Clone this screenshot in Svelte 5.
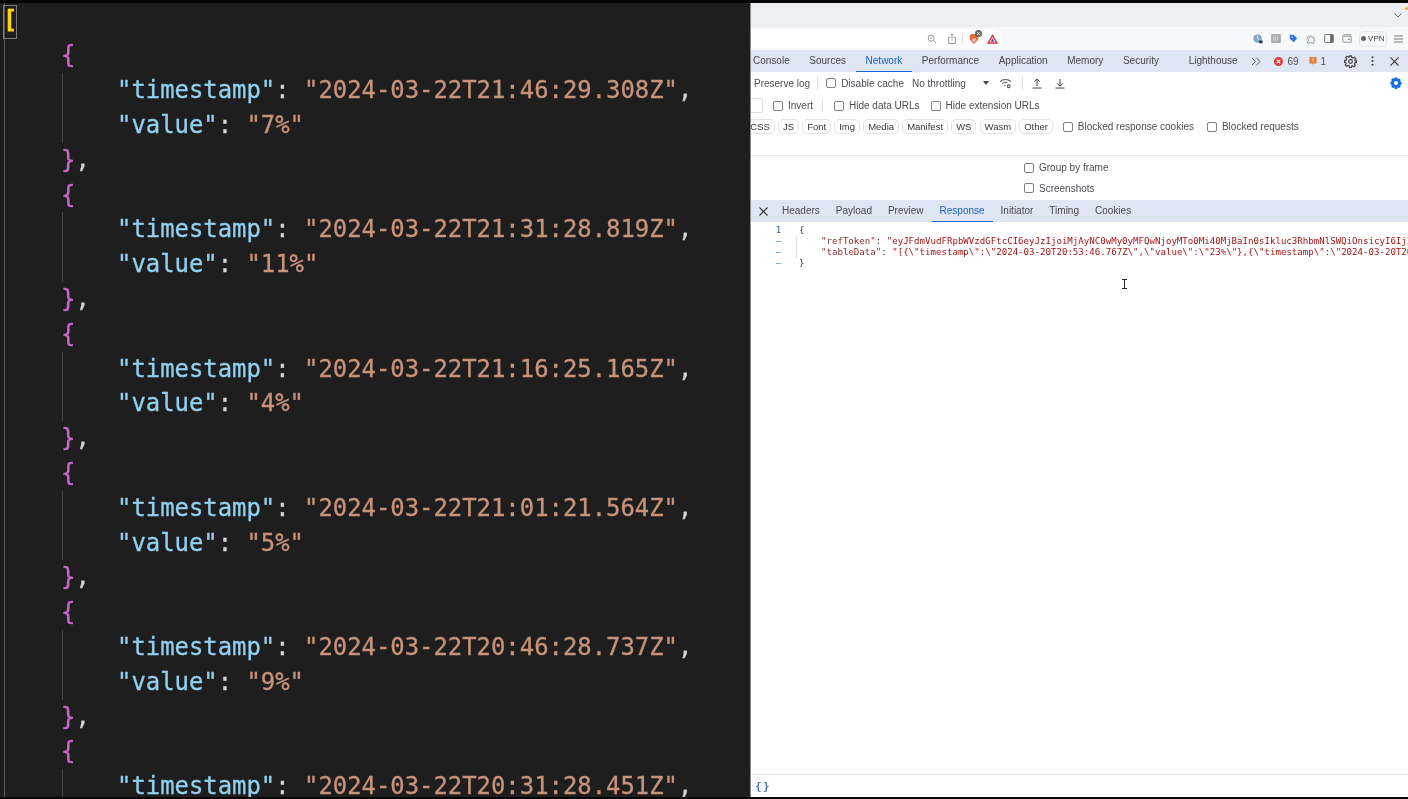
<script>
	const entries = [
		{ timestamp: "2024-03-22T21:46:29.308Z", value: "7%" },
		{ timestamp: "2024-03-22T21:31:28.819Z", value: "11%" },
		{ timestamp: "2024-03-22T21:16:25.165Z", value: "4%" },
		{ timestamp: "2024-03-22T21:01:21.564Z", value: "5%" },
		{ timestamp: "2024-03-22T20:46:28.737Z", value: "9%" },
		{ timestamp: "2024-03-22T20:31:28.451Z", value: "6%" }
	];
	const tabs = ["Console", "Sources", "Network", "Performance", "Application", "Memory", "Security", "Lighthouse"];
	const chips = ["CSS", "JS", "Font", "Img", "Media", "Manifest", "WS", "Wasm", "Other"];
	const detail_tabs = ["Headers", "Payload", "Preview", "Response", "Initiator", "Timing", "Cookies"];
	const ref_token = "eyJFdmVudFRpbWVzdGFtcCI6eyJzIjoiMjAyNC0wMy0yMFQwNjoyMTo0Mi40MjBaIn0sIkluc3RhbmNlSWQiOnsicyI6IjIbWFpbiJ9";
	const table_data = '[{\\"timestamp\\":\\"2024-03-20T20:53:46.767Z\\",\\"value\\":\\"23%\\"},{\\"timestamp\\":\\"2024-03-20T20:38:46.112Z\\"';
</script>

<div class="screen">
	<div class="frame">
		<section class="editor">
			<div class="code">
				<div class="line"><span class="match">[</span></div>
				{#each entries as entry}
					<div class="line ind"><span class="brace">{"{"}</span></div>
					<div class="body">
						<div class="line"><span class="key">"timestamp"</span><span class="punct">:</span> <span class="str">"{entry.timestamp}"</span><span class="punct">,</span></div>
						<div class="line"><span class="key">"value"</span><span class="punct">:</span> <span class="str">"{entry.value}"</span></div>
					</div>
					<div class="line ind"><span class="brace">{"}"}</span><span class="punct">,</span></div>
				{/each}
			</div>
		</section>

		<section class="browser">
			<div class="tabstrip">
				<svg class="chev" width="8" height="5" viewBox="0 0 8 5"><path d="M.5.5L4 4 7.500.5" fill="none" stroke="#666"/></svg>
				<i class="dot"></i>
			</div>
			<div class="toolbar">
				<div class="url">
					<svg width="10" height="10" viewBox="0 0 12 12" fill="none" stroke="#888"><circle cx="5" cy="5" r="3.6"/><path d="M8 8l3 3M3.500 5h3"/></svg>
					<svg class="share" width="8" height="11" viewBox="0 0 9 12" fill="none" stroke="#888"><path d="M2.500 4.500H.5v7h8v-7h-2M4.500 8V1M3 2.500L4.500 1 6 2.500"/></svg>
					<i class="vsep"></i>
					<span class="brave">
						<svg width="10" height="12" viewBox="0 0 13 14"><path d="M2 1.500L4 .5h5l2 1 1.500 1-.8 5.500L6.500 13.500 1.300 8 .5 2.500z" fill="#e2693a"/><path d="M4 6l2.500 1L9 6l-1 4-1.500 1L5 10z" fill="#f7d9c8"/></svg>
						<b>×</b>
					</span>
					<svg class="tri" width="11" height="10" viewBox="0 0 14 12"><path d="M7 1.500L12.500 11h-11z" fill="none" stroke="#d8344b" stroke-width="1.800"/><path d="M7 5l2.300 4.500H4.700z" fill="#5a3f9e"/></svg>
				</div>
				<div class="ext">
					<svg width="10" height="10" viewBox="0 0 13 13"><circle cx="6" cy="6" r="5.500" fill="#7fa6c9"/><path d="M6 2.500V6l2 1.500" stroke="#fff" fill="none" stroke-width="1.300"/><rect x="8" y="8.500" width="4.500" height="3.500" fill="#333"/></svg>
					<svg width="10" height="9" viewBox="0 0 13 12"><rect width="13" height="12" rx="1" fill="#a9adb2"/><path d="M3.500 3v6M6 3L5 9M9 3L8 9" stroke="#e8e8e8"/></svg>
					<svg width="9" height="9" viewBox="0 0 12 12"><path d="M1 1h5l5 5-5 5-5-5z" fill="#2f74d6"/><circle cx="4" cy="4" r="1" fill="#fff"/></svg>
					<svg width="10" height="10" viewBox="0 0 13 13" fill="none" stroke="#777"><path d="M2 4h2.500a1.500 1.500 0 0 1 3 0H10v2.500a1.500 1.500 0 0 1 0 3V12H7.500a1.500 1.500 0 0 0-3 0H2V9.500a1.500 1.500 0 0 0 0-3z"/></svg>
					<svg width="10" height="9" viewBox="0 0 13 12"><rect x=".7" y=".7" width="11.600" height="10.600" rx="1" fill="none" stroke="#666" stroke-width="1.200"/><rect x="8" y="1" width="4" height="10" fill="#666"/></svg>
					<svg width="10" height="9" viewBox="0 0 13 12" fill="none" stroke="#777"><path d="M11 2.500V1H2a1 1 0 0 0-1 1v8a1 1 0 0 0 1 1h10V3H2"/><rect x="8" y="6" width="2" height="2" fill="#777" stroke="none"/></svg>
					<span class="vpn"><i></i>VPN</span>
					<svg class="burger" width="9" height="8" viewBox="0 0 9 8" stroke="#777"><path d="M0 1h9M0 4h9M0 7h9"/></svg>
				</div>
			</div>

			<div class="dt-tabs">
				{#each tabs as tab}
					<span class="tab" class:active={tab === "Network"} class:wide={tab === "Lighthouse"}>{tab}</span>
				{/each}
				<svg class="more" width="10" height="9" viewBox="0 0 11 10" fill="none" stroke="#555" stroke-width="1.100"><path d="M1 1l4 4-4 4M6 1l4 4-4 4"/></svg>
				<svg class="err" width="9" height="9" viewBox="0 0 10 10"><circle cx="5" cy="5" r="5" fill="#d93a3a"/><path d="M3 3l4 4M7 3l-4 4" stroke="#fff" stroke-width="1.200"/></svg>
				<span class="count c69">69</span>
				<svg class="issue" width="8" height="8" viewBox="0 0 9 10"><path d="M0 0h9v8H5L3.500 10V8H0z" fill="#e0803a"/><path d="M4.500 1.500v3.500" stroke="#fff"/></svg>
				<span class="count c1">1</span>
				<svg class="gear" width="13" height="13" viewBox="0 0 14 14" fill="none" stroke="#444" stroke-width="1.300"><path d="M6 1h2l.4 1.700 1.300.6 1.500-.9 1.400 1.400-.9 1.500.6 1.300L13.500 6v2l-1.700.4-.6 1.300.9 1.500-1.400 1.400-1.500-.9-1.300.6L8 13.500H6l-.4-1.700-1.300-.6-1.500.9-1.400-1.400.9-1.500-.6-1.300L.5 8V6l1.700-.4.6-1.300-.9-1.500 1.400-1.400 1.500.9 1.300-.6z"/><circle cx="7" cy="7" r="2"/></svg>
				<svg class="dots" width="3" height="10" viewBox="0 0 3 12" fill="#444"><circle cx="1.500" cy="1.500" r="1.300"/><circle cx="1.500" cy="6" r="1.300"/><circle cx="1.500" cy="10.500" r="1.300"/></svg>
				<svg class="close" width="9" height="9" viewBox="0 0 10 10" stroke="#333" stroke-width="1.200"><path d="M.5.5l9 9M9.500.5l-9 9"/></svg>
			</div>

			<div class="row row-a">
				<span class="preserve">Preserve log</span>
				<i class="vsep"></i>
				<label class="check"><i></i>Disable cache</label>
				<span class="throttle">No throttling</span>
				<i class="arrow"></i>
				<svg class="wifi" width="13" height="11" viewBox="0 0 14 12" fill="none" stroke="#555" stroke-width="1.100"><path d="M1 4a8.500 8.500 0 0 1 12 0M3.200 6.300a5.500 5.500 0 0 1 6-1M5.500 8.500a2.500 2.500 0 0 1 1.500-.6"/><circle cx="10.500" cy="9" r="1.500"/></svg>
				<i class="vsep sep2"></i>
				<svg class="up" width="10" height="11" viewBox="0 0 11 12" fill="none" stroke="#444" stroke-width="1.100"><path d="M5.500 9V1M2.500 4l3-3 3 3M.5 11h10"/></svg>
				<svg class="down" width="10" height="11" viewBox="0 0 11 12" fill="none" stroke="#444" stroke-width="1.100"><path d="M5.500 1v8M2.500 6l3 3 3-3M.5 11h10"/></svg>
				<svg class="blue-gear" width="12" height="12" viewBox="0 0 14 14"><path d="M5.500.5h3l.5 1.800 1.700-.9 2 2.100-.9 1.700 1.700.5v3l-1.700.5.9 1.700-2 2.100-1.700-.9-.5 1.800h-3l-.5-1.800-1.700.9-2-2.100.9-1.700L.5 8.500v-3l1.700-.5-.9-1.700 2-2.100 1.700.9z" fill="#1a6fe0"/><circle cx="7" cy="7" r="2.300" fill="#fff"/></svg>
			</div>

			<div class="row row-b">
				<span class="filter"></span>
				<label class="check invert"><i></i>Invert</label>
				<i class="vsep"></i>
				<label class="check hide-data"><i></i>Hide data URLs</label>
				<label class="check hide-ext"><i></i>Hide extension URLs</label>
			</div>

			<div class="row row-c">
				{#each chips as chip}
					<span class="chip">{chip}</span>
				{/each}
				<label class="check cookies"><i></i>Blocked response cookies</label>
				<label class="check requests"><i></i>Blocked requests</label>
			</div>

			<div class="options">
				<label class="check"><i></i>Group by frame</label>
				<label class="check"><i></i>Screenshots</label>
			</div>

			<div class="dt-tabs detail">
				<svg class="x" width="9" height="9" viewBox="0 0 9 9" stroke="#333" stroke-width="1.100"><path d="M.5.5l8 8M8.500.5l-8 8"/></svg>
				{#each detail_tabs as tab}
					<span class="tab" class:active={tab === "Response"}>{tab}</span>
				{/each}
			</div>

			<div class="response">
				<div class="gutter">
					<div class="num">1</div>
					<div>–</div>
					<div>–</div>
					<div>–</div>
				</div>
				<div class="source">
					<div>{"{"}</div>
					<div class="props">
						<div class="prop"><span class="pk">"refToken"</span>: <span class="ps">"{ref_token}"</span></div>
						<div class="prop"><span class="pk">"tableData"</span>: <span class="ps">"{table_data}"</span></div>
					</div>
					<div>{"}"}</div>
				</div>
				<svg class="ibeam" width="5" height="10" viewBox="0 0 5 10" fill="none" stroke="#222"><path d="M0 .5h5M0 9.500h5M2.500 .5v9"/></svg>
			</div>

			<div class="footer">
				<span class="pretty">{"{}"}</span>
			</div>
		</section>
	</div>
</div>

<style>
	:global(body) {
		margin: 0;
		background: #000;
	}
	.screen {
		width: 1408px;
		height: 799px;
		overflow: hidden;
		background: #060606;
		padding: 3px 0 2px;
		box-sizing: border-box;
	}
	.frame {
		display: flex;
		height: 100%;
		filter: blur(0.35px);
	}
	.editor {
		width: 750px;
		flex: none;
		background: #1e1e1e;
		overflow: hidden;
		position: relative;
	}
	.code {
		margin-left: 4px;
		padding-top: 0.6px;
		border-left: 1px solid #5a5a5a;
		font-family: "DejaVu Sans Mono", monospace;
		font-size: 23.9px;
		-webkit-text-stroke: 0.3px;
		color: #d4d4d4;
	}
	.line {
		height: 34.8px;
		line-height: 34.8px;
		white-space: pre;
	}
	.match {
		display: inline-block;
		box-sizing: border-box;
		width: 14px;
		height: 34px;
		margin-left: -2px;
		margin-top: 1px;
		vertical-align: top;
		color: #ffd700;
		font-weight: 700;
		border: 1px solid #7a7a7a;
		line-height: 29px;
		text-indent: -1px;
	}
	.ind {
		padding-left: 56px;
	}
	.brace {
		color: #cc66cc;
	}
	.body {
		margin-left: 57px;
		border-left: 1px solid #454545;
		padding-left: 54px;
	}
	.key {
		color: #92d0f0;
	}
	.str {
		color: #c9937a;
	}
	.punct {
		color: #d4d4d4;
	}

	.browser {
		flex: 1;
		min-width: 0;
		display: flex;
		flex-direction: column;
		background: #fff;
		border-left: 1px solid #8a8a8a;
		font-family: "Liberation Sans", sans-serif;
		font-size: 10px;
		color: #4a4d52;
		overflow: hidden;
	}
	.browser svg {
		flex: none;
	}
	.tabstrip {
		height: 24px;
		flex: none;
		background: #eceef1;
		display: flex;
		align-items: center;
		justify-content: flex-end;
		padding-right: 6px;
		position: relative;
	}
	.dot {
		position: absolute;
		right: 0;
		top: 4px;
		width: 3px;
		height: 3px;
		border-radius: 50%;
		background: #f0a040;
	}
	.toolbar {
		height: 23px;
		flex: none;
		background: #f7f8f9;
		display: flex;
		align-items: center;
	}
	.url {
		width: 251px;
		height: 19px;
		flex: none;
		background: #fff;
		border-radius: 0 9px 9px 0;
		display: flex;
		align-items: center;
		justify-content: flex-end;
		padding-right: 4px;
		box-sizing: border-box;
	}
	.url .share {
		margin-left: 11px;
	}
	.url .vsep {
		height: 10px;
		margin: 0 6px 0 6px;
	}
	.brave {
		position: relative;
		display: flex;
	}
	.brave b {
		position: absolute;
		left: 6px;
		top: -3px;
		width: 7px;
		height: 7px;
		line-height: 7px;
		text-align: center;
		font-size: 7px;
		font-weight: 400;
		color: #fff;
		background: #666;
		border-radius: 4px;
	}
	.tri {
		margin-left: 8px;
	}
	.ext {
		margin-left: auto;
		display: flex;
		align-items: center;
		gap: 8px;
		padding-right: 5px;
	}
	.vpn {
		display: flex;
		align-items: center;
		gap: 2px;
		height: 14px;
		padding: 0 1.5px;
		border: 1px solid #e4e6e8;
		border-radius: 4px;
		font-size: 8px;
		color: #444;
		margin-left: -1px;
	}
	.vpn i {
		width: 5px;
		height: 5px;
		border-radius: 50%;
		background: #666;
	}
	.burger {
		margin-left: -1px;
	}

	.dt-tabs {
		height: 22px;
		flex: none;
		background: #dfe6f3;
		display: flex;
		align-items: center;
		position: relative;
	}
	.tab {
		height: 100%;
		line-height: 22px;
		padding: 0 9.8px;
		box-sizing: border-box;
		color: #44474c;
		white-space: nowrap;
	}
	.dt-tabs > .tab:first-child {
		padding-left: 2px;
	}
	.tab.wide {
		margin-left: 10px;
	}
	.tab.active {
		color: #1a62c4;
		border-bottom: 1.5px solid #1a6ad0;
	}
	.more {
		margin-left: 4px;
	}
	.err {
		margin-left: 13px;
	}
	.count {
		margin-left: 4px;
	}
	.issue {
		margin-left: 10px;
	}
	.gear {
		margin-left: 18px;
	}
	.dots {
		margin-left: 14px;
	}
	.close {
		margin-left: 16px;
	}

	.row {
		display: flex;
		align-items: center;
		flex: none;
		white-space: nowrap;
	}
	.vsep {
		width: 1px;
		height: 13px;
		background: #dcdee1;
		flex: none;
		display: block;
	}
	.check {
		display: flex;
		align-items: center;
		gap: 5px;
		white-space: nowrap;
	}
	.check i {
		width: 10px;
		height: 10px;
		box-sizing: border-box;
		border: 1px solid #7e8186;
		border-radius: 2px;
		flex: none;
	}
	.row-a {
		height: 22px;
	}
	.preserve {
		margin-left: 3px;
	}
	.row-a > .vsep {
		margin-left: 7px;
		margin-right: 8px;
	}
	.throttle {
		margin-left: 8px;
	}
	.arrow {
		margin-left: 17px;
		border: 3px solid transparent;
		border-top: 4px solid #444;
		border-bottom: 0;
	}
	.wifi {
		margin-left: 10px;
	}
	.row-a > .sep2 {
		margin-left: 10px;
		margin-right: 9px;
	}
	.down {
		margin-left: 13px;
	}
	.blue-gear {
		margin-left: auto;
		margin-right: 6px;
	}
	.row-b {
		height: 21px;
		margin-top: 1px;
	}
	.filter {
		width: 12px;
		height: 15px;
		box-sizing: border-box;
		border: 1px solid #dcdee1;
		border-left: 0;
		border-radius: 0 2px 2px 0;
	}
	.invert {
		margin-left: 10px;
	}
	.row-b > .vsep {
		margin-left: 9px;
	}
	.hide-data {
		margin-left: 11px;
	}
	.hide-ext {
		margin-left: 11px;
	}
	.row-c {
		height: 21px;
		gap: 3.5px;
		margin-left: -5.5px;
	}
	.chip {
		height: 15px;
		line-height: 13px;
		box-sizing: border-box;
		padding: 0 3.8px;
		border: 1px solid #e2e3e6;
		border-radius: 5px;
		font-size: 9.5px;
		color: #33363a;
		flex: none;
	}
	.cookies {
		margin-left: 6.5px;
	}
	.requests {
		margin-left: 9.5px;
	}
	.options {
		flex: none;
		height: 45px;
		margin-top: 18px;
		padding: 6px 0 0 273px;
		border-top: 1px solid #e6e7ea;
		display: flex;
		flex-direction: column;
		gap: 9.5px;
		box-sizing: border-box;
	}
	.detail .x {
		margin-left: 8px;
		margin-right: 6px;
	}
	.detail .tab {
		padding: 0 8px;
	}
	.response {
		flex: 1;
		display: flex;
		position: relative;
		padding-top: 3px;
		font-family: "DejaVu Sans Mono", monospace;
		font-size: 9.1px;
		line-height: 11px;
		overflow: hidden;
		min-height: 0;
		color: #333;
	}
	.gutter {
		width: 47px;
		flex: none;
		text-align: center;
		padding-left: 8px;
		box-sizing: border-box;
		color: #3f78c4;
	}
	.num {
		color: #2a62b8;
	}
	.source {
		min-width: 0;
		flex: 1;
		padding-left: 1px;
	}
	.props {
		border-left: 1px solid #dedede;
		margin-left: -3px;
		padding-left: 24px;
	}
	.prop {
		white-space: nowrap;
	}
	.pk {
		color: #8a2b2b;
	}
	.ps {
		color: #a31515;
	}
	.ibeam {
		position: absolute;
		left: 371px;
		top: 57px;
	}
	.footer {
		height: 22px;
		flex: none;
		border-top: 1px solid #e8e8ea;
		display: flex;
		align-items: center;
		padding-left: 4px;
	}
	.pretty {
		font-family: "DejaVu Sans Mono", monospace;
		font-size: 11px;
		font-weight: 700;
		letter-spacing: 1.5px;
		color: #4a78c0;
	}
</style>
